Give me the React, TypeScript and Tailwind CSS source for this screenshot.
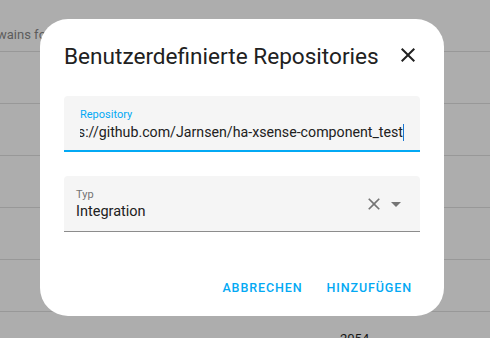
const rows = [0, 1, 2, 3, 4, 5, 6];

function MdiClose({ className }: { className?: string }) {
  return (
    <svg viewBox="0 0 24 24" className={className} fill="currentColor">
      <path d="M19,6.41L17.59,5L12,10.59L6.41,5L5,6.41L10.59,12L5,17.59L6.41,19L12,13.41L17.59,19L19,17.59L13.41,12L19,6.41Z" />
    </svg>
  );
}

function MenuDown({ className }: { className?: string }) {
  return (
    <svg viewBox="0 0 24 24" className={className} fill="currentColor">
      <path d="M7,10L12,15L17,10H7Z" />
    </svg>
  );
}

export default function App() {
  return (
    <div
      className="relative h-[338px] w-[490px] overflow-hidden bg-[#adadad]"
      style={{ fontFamily: "Roboto, 'Liberation Sans', sans-serif" }}
    >
      {/* page behind the scrim */}
      <div className="flex flex-col">
        {rows.map((i) => (
          <div key={i} className="h-[52px] shrink-0 border-b border-[#989898]">
            {i === 0 && (
              <div className="-ml-[3px] pt-[25px] text-[13px] leading-5 text-[#5c5c5c]">
                wains for
              </div>
            )}
            {i === 6 && (
              <div className="ml-[340px] pt-[17px] text-[13px] leading-5 text-[#161616]">
                2054
              </div>
            )}
          </div>
        ))}
      </div>

      {/* dialog */}
      <div className="absolute left-[40px] top-[19px] flex h-[297px] w-[404px] flex-col rounded-[28px] bg-white px-6">
        <div className="flex h-[77px] items-start justify-between pt-[24px]">
          <h2 className="text-[22.6px] leading-[28px] text-[#212121]">
            Benutzerdefinierte Repositories
          </h2>
          <MdiClose className="h-6 w-6 text-[#212121]" />
        </div>

        <div className="flex h-[56px] flex-col rounded-t-[4px] border-b-2 border-[#03a9f4] bg-[#f5f5f5] px-4">
          <div className="pt-[12px] text-[11px] leading-[14px] text-[#03a9f4]">
            Repository
          </div>
          <div className="flex justify-end overflow-hidden whitespace-nowrap text-[14.2px] leading-5 text-[#212121]">
            <span>https://github.com/Jarnsen/ha-xsense-component_test</span>
            <span className="mt-[2px] h-[17px] w-px shrink-0 bg-[#1976d2]" />
          </div>
        </div>

        <div className="mt-6 flex h-[56px] items-center rounded-t-[4px] border-b border-[#8c8c8c] bg-[#f5f5f5] pl-3 pr-3">
          <div className="flex flex-1 flex-col self-stretch">
            <div className="pt-[12px] text-[11px] leading-[14px] text-[#737373]">Typ</div>
            <div className="text-[14.5px] leading-5 text-[#212121]">Integration</div>
          </div>
          <MdiClose className="h-5 w-5 text-[#757575]" />
          <MenuDown className="h-6 w-6 text-[#757575]" />
        </div>

        <div className="mt-auto flex justify-end gap-2 pb-[10px]">
          <button className="px-2 text-[12.5px] font-medium uppercase leading-9 tracking-[0.9px] text-[#03a9f4]">
            Abbrechen
          </button>
          <button className="px-2 text-[12.5px] font-medium uppercase leading-9 tracking-[0.9px] text-[#03a9f4]">
            Hinzufügen
          </button>
        </div>
      </div>
    </div>
  );
}
